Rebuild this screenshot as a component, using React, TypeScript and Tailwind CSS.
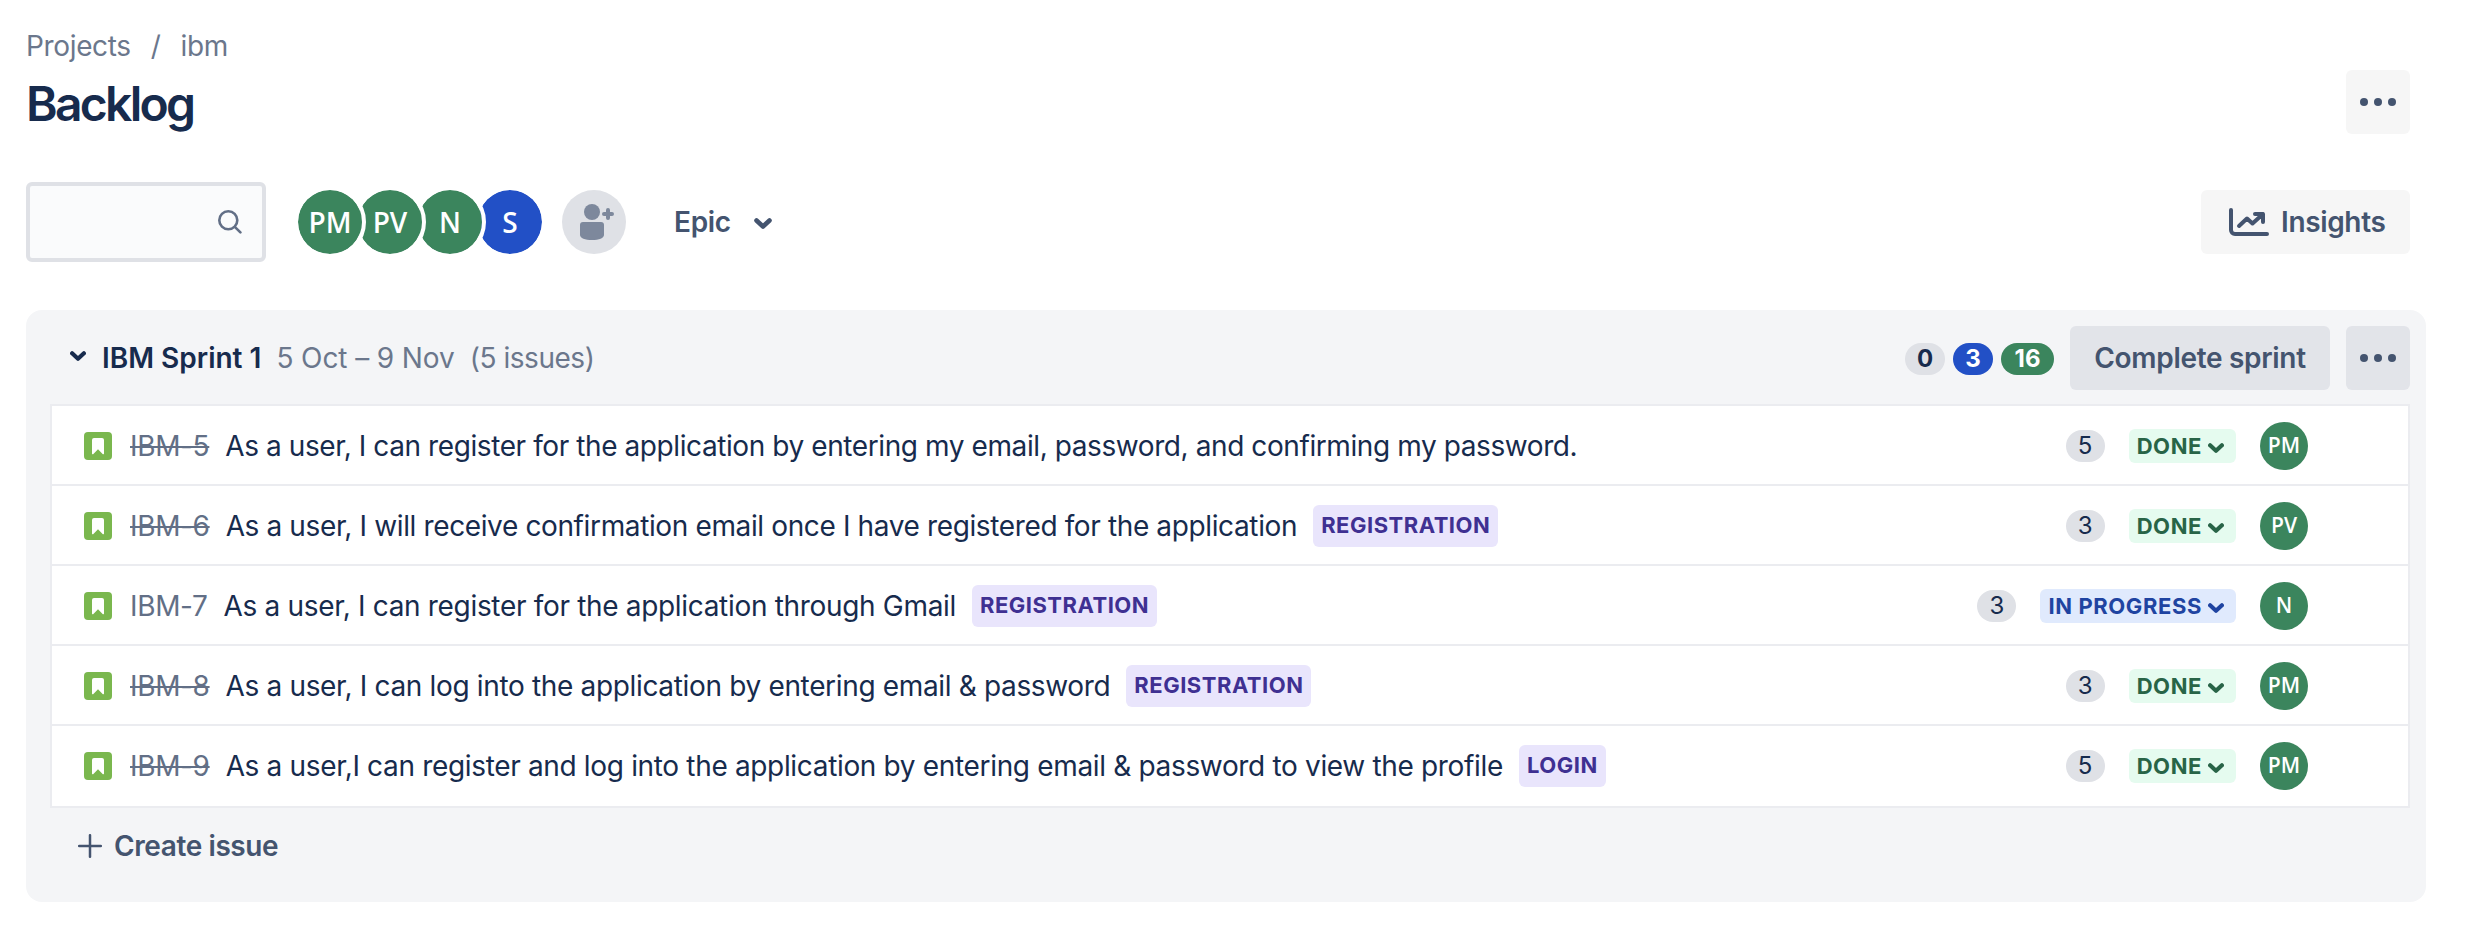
import React from "react";

type Status = "DONE" | "IN PROGRESS";

interface Issue {
  id: string;
  summary: string;
  tracking: string;
  epic?: string;
  points: number;
  status: Status;
  assignee: string;
}

const issues: Issue[] = [
  { id: "IBM-5", summary: "As a user, I can register for the application by entering my email, password, and confirming my password.", tracking: "tracking-[-0.41px]", points: 5, status: "DONE", assignee: "PM" },
  { id: "IBM-6", summary: "As a user, I will receive confirmation email once I have registered for the application", tracking: "tracking-[-0.37px]", epic: "REGISTRATION", points: 3, status: "DONE", assignee: "PV" },
  { id: "IBM-7", summary: "As a user, I can register for the application through Gmail", tracking: "tracking-[-0.32px]", epic: "REGISTRATION", points: 3, status: "IN PROGRESS", assignee: "N" },
  { id: "IBM-8", summary: "As a user, I can log into the application by entering email & password", tracking: "tracking-[-0.34px]", epic: "REGISTRATION", points: 3, status: "DONE", assignee: "PM" },
  { id: "IBM-9", summary: "As a user,I can register and log into the application by entering email & password to view the profile", tracking: "tracking-[-0.335px]", epic: "LOGIN", points: 5, status: "DONE", assignee: "PM" },
];

const people = [
  { initials: "PM", className: "z-40 bg-[#3b855d]" },
  { initials: "PV", className: "z-30 bg-[#3b855d]" },
  { initials: "N", className: "z-20 bg-[#3b855d]" },
  { initials: "S", className: "z-10 bg-[#2250c6]" },
];

function Chevron({ className }: { className: string }) {
  return (
    <svg viewBox="0 0 16 10" className={className} fill="none" stroke="currentColor" strokeWidth="4.2" strokeLinecap="round" strokeLinejoin="round">
      <path d="M2.1 2.300 8 7.700l5.900-5.400" />
    </svg>
  );
}

function Dots() {
  return (
    <svg viewBox="0 0 36 8" className="h-2 w-9" fill="currentColor">
      <circle cx="4" cy="4" r="4" />
      <circle cx="18" cy="4" r="4" />
      <circle cx="32" cy="4" r="4" />
    </svg>
  );
}

function StoryIcon() {
  return (
    <svg viewBox="0 0 28 28" className="size-7 shrink-0">
      <rect width="28" height="28" rx="4" fill="#7ab74e" />
      <path d="M8 8a2 2 0 0 1 2-2h8a2 2 0 0 1 2 2v13.400a.8.8 0 0 1-1.400.6L14 17.300 9.400 22a.8.8 0 0 1-1.400-.6z" fill="#fff" />
    </svg>
  );
}

function IssueRow({ issue, last }: { issue: Issue; last: boolean }) {
  const done = issue.status === "DONE";
  return (
    <li className={`flex h-20 items-center pr-[100px] pl-8 ${last ? "" : "border-b-2 border-[#ebecf0] pt-0.5"}`}>
      <StoryIcon />
      <span className={`ml-[18px] text-[28px] tracking-[-0.35px] text-[#626f86] ${done ? "line-through decoration-2" : ""}`}>{issue.id}</span>
      <span className={`ml-4 text-[28px] whitespace-nowrap text-[#172b4d] ${issue.tracking}`}>{issue.summary}</span>
      {issue.epic && (
        <span className="ml-4 flex h-[42px] items-center rounded-md bg-[#e9e5fc] px-2 pb-0.5 text-[22px] font-bold tracking-[0.5px] text-[#3f3092]">{issue.epic}</span>
      )}
      <span className="ml-auto flex h-8 w-[39px] items-center justify-center rounded-full bg-[#dfe1e6] text-2xl text-[#172b4d]">{issue.points}</span>
      <span className={`ml-6 flex h-[34px] items-center rounded-md pr-3 pl-2 text-[22px] font-bold tracking-[0.6px] ${done ? "bg-[#e5fbef] text-[#286447]" : "bg-[#e0eafd] text-[#1f44a1]"}`}>
        {issue.status}
        <Chevron className="mt-1 ml-1.5 h-2.5 w-4" />
      </span>
      <span className="ml-6 flex size-12 items-center justify-center rounded-full bg-[#3b855d] font-['Open_Sans',sans-serif] text-[21px] font-semibold text-white">{issue.assignee}</span>
    </li>
  );
}

export default function App() {
  return (
    <main className="h-[938px] bg-white pt-[26px] pr-16 pl-[26px] font-['Inter',sans-serif] text-[#44546f]">
      <nav className="flex h-10 items-center text-[28px] tracking-[-0.35px] text-[#6b778c]">
        <span>Projects</span>
        <span className="ml-5">/</span>
        <span className="ml-5">ibm</span>
      </nav>
      <header className="mt-1 flex h-16 items-center justify-between pr-4">
        <h1 className="pt-1 text-[48px] leading-none font-semibold tracking-[-2.7px] text-[#172b4d]">Backlog</h1>
        <button className="flex size-16 items-center justify-center rounded-md bg-[#f6f6f6]"><Dots /></button>
      </header>

      <section className="mt-12 flex h-20 items-center pr-4">
        <div className="flex h-20 w-60 items-center justify-end rounded-md border-4 border-[#dfe1e6] bg-[#fafbfc] pr-5 text-[#626f86]">
          <svg viewBox="0 0 24 24" className="size-6" fill="none" stroke="currentColor" strokeWidth="2.6" strokeLinecap="round">
            <circle cx="10.300" cy="10.300" r="9" />
            <path d="m16.800 16.800 5.600 5.600" />
          </svg>
        </div>
        <div className="ml-7 flex">
          {people.map((p) => (
            <span key={p.initials} className={`relative -mr-3 flex size-[72px] items-center justify-center rounded-full border-4 border-white bg-clip-padding font-['Open_Sans',sans-serif] text-[28px] font-semibold text-white ${p.className}`}>{p.initials}</span>
          ))}
        </div>
        <svg viewBox="0 0 64 64" className="ml-7 size-16 rounded-full bg-[#dfe1e6] text-[#7d889c]" fill="currentColor">
          <circle cx="30" cy="22" r="8" />
          <path d="M18 35a3 3 0 0 1 3-3h18a3 3 0 0 1 3 3v10c0 3-5 5-12 5s-12-2-12-5z" />
          <path d="M46 20v8M42 24h8" stroke="currentColor" strokeWidth="4" strokeLinecap="round" />
        </svg>
        <span className="ml-12 text-[28px] font-semibold tracking-[-0.3px]">Epic</span>
        <Chevron className="mt-0.5 ml-[23px] h-[11px] w-[18px]" />
        <button className="ml-auto flex h-16 w-[209px] items-center rounded-md bg-[#f6f6f6] pl-7 text-[28px] font-[560] tracking-[-0.35px]">
          <svg viewBox="0 0 40 28" className="mr-3 h-7 w-10" fill="none" stroke="currentColor" strokeWidth="4" strokeLinecap="round" strokeLinejoin="round">
            <path d="M2 2v20a4 4 0 0 0 4 4h32" />
            <path d="M10 18l8-7.500 5.500 5L34 6M26 6h8v8" />
          </svg>
          Insights
        </button>
      </section>

      <section className="mt-12 h-[592px] rounded-2xl bg-[#f4f5f7] pt-4 pr-4 pl-6">
        <header className="flex h-16 items-center">
          <Chevron className="mb-1 ml-5 h-2.5 w-4 text-[#172b4d]" />
          <h2 className="ml-4 text-[28px] font-semibold tracking-[0px] text-[#172b4d]">IBM Sprint 1</h2>
          <span className="ml-[15px] text-[28px] tracking-[-0.1px] text-[#6b778c]">5 Oct – 9 Nov</span>
          <span className="ml-[15px] text-[28px] tracking-[-0.45px] text-[#6b778c]">(5 issues)</span>
          <div className="mt-0.5 ml-auto flex gap-2 text-2xl font-bold">
            <span className="flex h-8 w-10 items-center justify-center rounded-full bg-[#dfe1e6] text-[#172b4d]">0</span>
            <span className="flex h-8 w-10 items-center justify-center rounded-full bg-[#2250c6] text-white">3</span>
            <span className="flex h-8 w-[53px] items-center justify-center rounded-full bg-[#3b855d] text-white">16</span>
          </div>
          <button className="ml-4 flex h-16 w-[260px] items-center justify-center rounded-md bg-[#e2e4e9] text-[28px] font-[560] tracking-[-0.3px]">Complete sprint</button>
          <button className="ml-4 flex size-16 items-center justify-center rounded-md bg-[#e2e4e9]"><Dots /></button>
        </header>
        <ul className="mt-3.5 border-2 border-[#ebecf0] bg-white">
          {issues.map((issue, i) => (
            <IssueRow key={issue.id} issue={issue} last={i === issues.length - 1} />
          ))}
        </ul>
        <button className="mt-3.5 ml-7 flex h-12 items-center text-[28px] font-[560] tracking-[-0.4px]">
          <svg viewBox="0 0 24 24" className="mr-3 size-6" fill="none" stroke="currentColor" strokeWidth="2.500" strokeLinecap="round">
            <path d="M12 1.200v21.600M1.200 12h21.600" />
          </svg>
          Create issue
        </button>
      </section>
    </main>
  );
}
